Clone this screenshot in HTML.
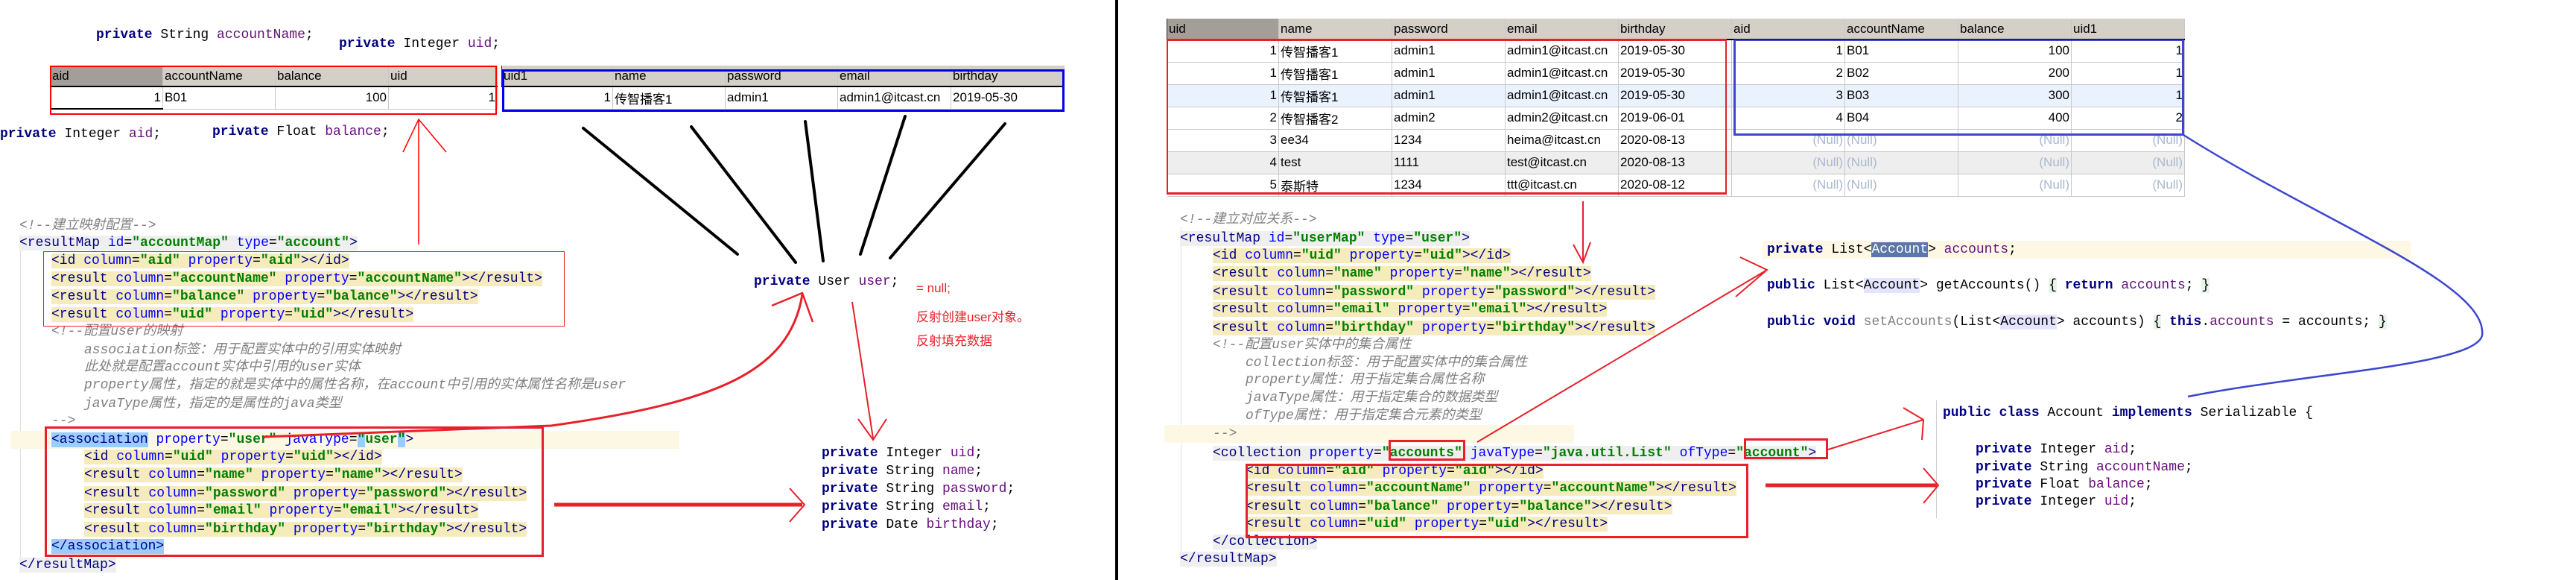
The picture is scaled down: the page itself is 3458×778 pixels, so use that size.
<!DOCTYPE html>
<html><head><meta charset="utf-8">
<style>
*{margin:0;padding:0;box-sizing:border-box}
body{width:3458px;height:778px;background:#fff;position:relative;overflow:hidden;font-family:"Liberation Mono","Noto Sans CJK SC",monospace;font-size:18px}
.l{position:absolute;height:24px;line-height:24px;white-space:pre;color:#000}
.k{color:#000080;font-weight:bold}
.f{color:#660e7a}
.t{color:#000080}
.a{color:#0000ff}
.v{color:#008000;font-weight:bold}
.c{color:#808080;font-style:italic}
.y{background:#f6ebbc}
.g{background:#efefef}
.sel{background:#99ccff}
table{position:absolute;border-collapse:collapse;table-layout:fixed;font-family:"Liberation Sans","Noto Sans CJK SC",sans-serif;font-size:17px}
td,th{overflow:hidden;white-space:nowrap;padding:0 2px;font-weight:normal;text-align:left;border-right:1px solid #c8c8c8;border-bottom:1px solid #c8c8c8}
th{background:#d4d0c8;height:28px;border-bottom:2px solid #000;border-left:1px solid #222}
th.d{background:#a39f98}
td{height:30px}
.r{text-align:right}
.n{color:#a9b8d0}
.rt{position:absolute;color:#e8202a;font-family:"Liberation Sans","Noto Sans CJK SC",sans-serif;font-size:17px;white-space:pre}
.box{position:absolute;border:3px solid #e8202a}
</style></head><body>

<!-- LEFT PANEL -->
<div class="l" style="left:129px;top:35px"><span class="k">private</span> String <span class="f">accountName</span>;</div>
<div class="l" style="left:455px;top:47px"><span class="k">private</span> Integer <span class="f">uid</span>;</div>
<div class="l" style="left:0px;top:168px"><span class="k">private</span> Integer <span class="f">aid</span>;</div>
<div class="l" style="left:285px;top:165px"><span class="k">private</span> Float <span class="f">balance</span>;</div>

<table style="left:67px;top:88px;width:600px">
<colgroup><col style="width:151px"><col style="width:151px"><col style="width:152px"><col style="width:146px"></colgroup>
<tr><th class="d">aid</th><th>accountName</th><th>balance</th><th>uid</th></tr>
<tr><td class="r" style="border-bottom:2px solid #000">1</td><td>B01</td><td class="r">100</td><td class="r">1</td></tr>
</table>
<table style="left:673px;top:88px;width:755px">
<colgroup><col style="width:149px"><col style="width:151px"><col style="width:151px"><col style="width:152px"><col style="width:152px"></colgroup>
<tr><th>uid1</th><th>name</th><th>password</th><th>email</th><th>birthday</th></tr>
<tr><td class="r">1</td><td>传智播客1</td><td>admin1</td><td>admin1@itcast.cn</td><td>2019-05-30</td></tr>
</table>
<div style="position:absolute;left:67px;top:88px;width:600px;height:66px;border:2px solid #ff0000"></div>
<div style="position:absolute;left:674px;top:93px;width:755px;height:57px;border:3px solid #0000ee"></div>

<div style="position:absolute;left:27px;top:315px;width:1px;height:445px;background:#e0e0e0"></div>
<div style="position:absolute;left:14px;top:578px;width:898px;height:24px;background:#fdf8e4"></div>

<div class="l c" style="left:26px;top:291px">&lt;!--建立映射配置--&gt;</div>
<div class="l" style="left:26px;top:314px"><span class="g"><span class="t">&lt;resultMap </span><span class="a">id</span>=<span class="v">"accountMap"</span> <span class="a">type</span>=<span class="v">"account"</span><span class="t">&gt;</span></span></div>
<div class="l" style="left:69px;top:338px"><span class="y"><span class="t">&lt;id </span><span class="a">column</span>=<span class="v">"aid"</span> <span class="a">property</span>=<span class="v">"aid"</span><span class="t">&gt;&lt;/id&gt;</span></span></div>
<div class="l" style="left:69px;top:362px"><span class="y"><span class="t">&lt;result </span><span class="a">column</span>=<span class="v">"accountName"</span> <span class="a">property</span>=<span class="v">"accountName"</span><span class="t">&gt;&lt;/result&gt;</span></span></div>
<div class="l" style="left:69px;top:386px"><span class="y"><span class="t">&lt;result </span><span class="a">column</span>=<span class="v">"balance"</span> <span class="a">property</span>=<span class="v">"balance"</span><span class="t">&gt;&lt;/result&gt;</span></span></div>
<div class="l" style="left:69px;top:410px"><span class="y"><span class="t">&lt;result </span><span class="a">column</span>=<span class="v">"uid"</span> <span class="a">property</span>=<span class="v">"uid"</span><span class="t">&gt;&lt;/result&gt;</span></span></div>
<div class="l c" style="left:69px;top:433px">&lt;!--配置user的映射</div>
<div class="l c" style="left:113px;top:458px">association标签：用于配置实体中的引用实体映射</div>
<div class="l c" style="left:113px;top:481px">此处就是配置account实体中引用的user实体</div>
<div class="l c" style="left:113px;top:505px">property属性，指定的就是实体中的属性名称，在account中引用的实体属性名称是user</div>
<div class="l c" style="left:113px;top:530px">javaType属性，指定的是属性的java类型</div>
<div class="l c" style="left:69px;top:553px">--&gt;</div>
<div class="l" style="left:69px;top:578px"><span class="t sel">&lt;association</span><span class="t"> </span><span class="a">property</span>=<span class="v">"user"</span> <span class="a">javaType</span>=<span class="v"><span class="sel">"</span>user<span class="sel">"</span></span><span class="t">&gt;</span></div>
<div class="l" style="left:113px;top:601px"><span class="y"><span class="t">&lt;id </span><span class="a">column</span>=<span class="v">"uid"</span> <span class="a">property</span>=<span class="v">"uid"</span><span class="t">&gt;&lt;/id&gt;</span></span></div>
<div class="l" style="left:113px;top:625px"><span class="y"><span class="t">&lt;result </span><span class="a">column</span>=<span class="v">"name"</span> <span class="a">property</span>=<span class="v">"name"</span><span class="t">&gt;&lt;/result&gt;</span></span></div>
<div class="l" style="left:113px;top:650px"><span class="y"><span class="t">&lt;result </span><span class="a">column</span>=<span class="v">"password"</span> <span class="a">property</span>=<span class="v">"password"</span><span class="t">&gt;&lt;/result&gt;</span></span></div>
<div class="l" style="left:113px;top:673px"><span class="y"><span class="t">&lt;result </span><span class="a">column</span>=<span class="v">"email"</span> <span class="a">property</span>=<span class="v">"email"</span><span class="t">&gt;&lt;/result&gt;</span></span></div>
<div class="l" style="left:113px;top:698px"><span class="y"><span class="t">&lt;result </span><span class="a">column</span>=<span class="v">"birthday"</span> <span class="a">property</span>=<span class="v">"birthday"</span><span class="t">&gt;&lt;/result&gt;</span></span></div>
<div class="l" style="left:69px;top:721px"><span class="t sel">&lt;/association&gt;</span></div>
<div class="l" style="left:26px;top:746px"><span class="g t">&lt;/resultMap&gt;</span></div>

<div style="position:absolute;left:58px;top:337px;width:700px;height:101px;border:1.5px solid #e8202a"></div>
<div class="box" style="left:60px;top:572px;width:670px;height:175px"></div>

<div class="l" style="left:1012px;top:366px"><span class="k">private</span> User <span class="f">user</span>;</div>
<div class="rt" style="left:1230px;top:377px">= null;</div>
<div class="rt" style="left:1230px;top:411px">反射创建user对象。</div>
<div class="rt" style="left:1230px;top:443px">反射填充数据</div>

<div class="l" style="left:1103px;top:596px"><span class="k">private</span> Integer <span class="f">uid</span>;</div>
<div class="l" style="left:1103px;top:620px"><span class="k">private</span> String <span class="f">name</span>;</div>
<div class="l" style="left:1103px;top:644px"><span class="k">private</span> String <span class="f">password</span>;</div>
<div class="l" style="left:1103px;top:668px"><span class="k">private</span> String <span class="f">email</span>;</div>
<div class="l" style="left:1103px;top:692px"><span class="k">private</span> Date <span class="f">birthday</span>;</div>

<!-- divider -->
<div style="position:absolute;left:1497px;top:0;width:4px;height:778px;background:#000"></div>

<!-- RIGHT PANEL -->
<table style="left:1566px;top:25px;width:1366px">
<colgroup><col style="width:150px"><col style="width:152px"><col style="width:152px"><col style="width:152px"><col style="width:152px"><col style="width:152px"><col style="width:152px"><col style="width:152px"><col style="width:152px"></colgroup>
<tr><th class="d">uid</th><th>name</th><th>password</th><th>email</th><th>birthday</th><th>aid</th><th>accountName</th><th>balance</th><th>uid1</th></tr>
<tr><td class="r">1</td><td>传智播客1</td><td>admin1</td><td>admin1@itcast.cn</td><td>2019-05-30</td><td class="r">1</td><td>B01</td><td class="r">100</td><td class="r">1</td></tr>
<tr><td class="r">1</td><td>传智播客1</td><td>admin1</td><td>admin1@itcast.cn</td><td>2019-05-30</td><td class="r">2</td><td>B02</td><td class="r">200</td><td class="r">1</td></tr>
<tr style="background:#eaf3fd"><td class="r">1</td><td>传智播客1</td><td>admin1</td><td>admin1@itcast.cn</td><td>2019-05-30</td><td class="r">3</td><td>B03</td><td class="r">300</td><td class="r">1</td></tr>
<tr><td class="r">2</td><td>传智播客2</td><td>admin2</td><td>admin2@itcast.cn</td><td>2019-06-01</td><td class="r">4</td><td>B04</td><td class="r">400</td><td class="r">2</td></tr>
<tr><td class="r">3</td><td>ee34</td><td>1234</td><td>heima@itcast.cn</td><td>2020-08-13</td><td class="r n">(Null)</td><td class="n">(Null)</td><td class="r n">(Null)</td><td class="r n">(Null)</td></tr>
<tr style="background:#eeeeee"><td class="r">4</td><td>test</td><td>1111</td><td>test@itcast.cn</td><td>2020-08-13</td><td class="r n">(Null)</td><td class="n">(Null)</td><td class="r n">(Null)</td><td class="r n">(Null)</td></tr>
<tr><td class="r">5</td><td>泰斯特</td><td>1234</td><td>ttt@itcast.cn</td><td>2020-08-12</td><td class="r n">(Null)</td><td class="n">(Null)</td><td class="r n">(Null)</td><td class="r n">(Null)</td></tr>
</table>
<div style="position:absolute;left:1566px;top:52px;width:752px;height:209px;border:2px solid #e8202a;border-top-width:3px;border-bottom-width:3px"></div>
<div style="position:absolute;left:2327px;top:53px;width:605px;height:129px;border:3px solid #3c46d0;border-top-width:2px"></div>

<div style="position:absolute;left:1585px;top:305px;width:1px;height:455px;background:#e0e0e0"></div>
<div style="position:absolute;left:1563px;top:570px;width:550px;height:24px;background:#fdf8e4"></div>
<div style="position:absolute;left:2366px;top:323px;width:870px;height:24px;background:#fdf8e4"></div>

<div class="l c" style="left:1584px;top:283px">&lt;!--建立对应关系--&gt;</div>
<div class="l" style="left:1584px;top:308px"><span class="g"><span class="t">&lt;resultMap </span><span class="a">id</span>=<span class="v">"userMap"</span> <span class="a">type</span>=<span class="v">"user"</span><span class="t">&gt;</span></span></div>
<div class="l" style="left:1628px;top:331px"><span class="y"><span class="t">&lt;id </span><span class="a">column</span>=<span class="v">"uid"</span> <span class="a">property</span>=<span class="v">"uid"</span><span class="t">&gt;&lt;/id&gt;</span></span></div>
<div class="l" style="left:1628px;top:355px"><span class="y"><span class="t">&lt;result </span><span class="a">column</span>=<span class="v">"name"</span> <span class="a">property</span>=<span class="v">"name"</span><span class="t">&gt;&lt;/result&gt;</span></span></div>
<div class="l" style="left:1628px;top:380px"><span class="y"><span class="t">&lt;result </span><span class="a">column</span>=<span class="v">"password"</span> <span class="a">property</span>=<span class="v">"password"</span><span class="t">&gt;&lt;/result&gt;</span></span></div>
<div class="l" style="left:1628px;top:403px"><span class="y"><span class="t">&lt;result </span><span class="a">column</span>=<span class="v">"email"</span> <span class="a">property</span>=<span class="v">"email"</span><span class="t">&gt;&lt;/result&gt;</span></span></div>
<div class="l" style="left:1628px;top:428px"><span class="y"><span class="t">&lt;result </span><span class="a">column</span>=<span class="v">"birthday"</span> <span class="a">property</span>=<span class="v">"birthday"</span><span class="t">&gt;&lt;/result&gt;</span></span></div>
<div class="l c" style="left:1628px;top:451px">&lt;!--配置user实体中的集合属性</div>
<div class="l c" style="left:1672px;top:475px">collection标签：用于配置实体中的集合属性</div>
<div class="l c" style="left:1672px;top:498px">property属性：用于指定集合属性名称</div>
<div class="l c" style="left:1672px;top:522px">javaType属性：用于指定集合的数据类型</div>
<div class="l c" style="left:1672px;top:546px">ofType属性：用于指定集合元素的类型</div>
<div class="l c" style="left:1628px;top:570px">--&gt;</div>
<div class="l" style="left:1628px;top:596px"><span class="g"><span class="t">&lt;collection </span><span class="a">property</span>=<span class="v">"accounts"</span> <span class="a">javaType</span>=<span class="v">"java.util.List"</span> <span class="a">ofType</span>=<span class="v">"account"</span><span class="t">&gt;</span></span></div>
<div class="l" style="left:1672px;top:620px"><span class="y"><span class="t">&lt;id </span><span class="a">column</span>=<span class="v">"aid"</span> <span class="a">property</span>=<span class="v">"aid"</span><span class="t">&gt;&lt;/id&gt;</span></span></div>
<div class="l" style="left:1672px;top:643px"><span class="y"><span class="t">&lt;result </span><span class="a">column</span>=<span class="v">"accountName"</span> <span class="a">property</span>=<span class="v">"accountName"</span><span class="t">&gt;&lt;/result&gt;</span></span></div>
<div class="l" style="left:1672px;top:668px"><span class="y"><span class="t">&lt;result </span><span class="a">column</span>=<span class="v">"balance"</span> <span class="a">property</span>=<span class="v">"balance"</span><span class="t">&gt;&lt;/result&gt;</span></span></div>
<div class="l" style="left:1672px;top:691px"><span class="y"><span class="t">&lt;result </span><span class="a">column</span>=<span class="v">"uid"</span> <span class="a">property</span>=<span class="v">"uid"</span><span class="t">&gt;&lt;/result&gt;</span></span></div>
<div class="l" style="left:1628px;top:715px"><span class="g t">&lt;/collection&gt;</span></div>
<div class="l" style="left:1584px;top:738px"><span class="g t">&lt;/resultMap&gt;</span></div>

<div class="box" style="left:1864px;top:590px;width:103px;height:28px"></div>
<div class="box" style="left:2341px;top:588px;width:113px;height:28px"></div>
<div class="box" style="left:1672px;top:622px;width:675px;height:100px"></div>

<div class="l" style="left:2372px;top:323px"><span class="k">private</span> List&lt;<span style="background:#5a76aa;color:#fff">Account</span>&gt; <span class="f">accounts</span>;</div>
<div class="l" style="left:2372px;top:371px"><span class="k">public</span> List&lt;<span style="background:#e4e4ff">Account</span>&gt; getAccounts() <span style="background:#e8f4e8">{</span> <span class="k">return</span> <span class="f">accounts</span>; <span style="background:#e8f4e8">}</span></div>
<div class="l" style="left:2372px;top:420px"><span class="k">public void</span> <span style="color:#808080">setAccounts</span>(List&lt;<span style="background:#e4e4ff">Account</span>&gt; accounts) <span style="background:#e8f4e8">{</span> <span class="k">this</span>.<span class="f">accounts</span> = accounts; <span style="background:#e8f4e8">}</span></div>

<div style="position:absolute;left:2599px;top:537px;width:1px;height:158px;background:#d0d0d0"></div>
<div class="l" style="left:2608px;top:542px"><span class="k">public class</span> Account <span class="k">implements</span> Serializable {</div>
<div class="l" style="left:2652px;top:591px"><span class="k">private</span> Integer <span class="f">aid</span>;</div>
<div class="l" style="left:2652px;top:615px"><span class="k">private</span> String <span class="f">accountName</span>;</div>
<div class="l" style="left:2652px;top:638px"><span class="k">private</span> Float <span class="f">balance</span>;</div>
<div class="l" style="left:2652px;top:661px"><span class="k">private</span> Integer <span class="f">uid</span>;</div>

<svg width="3458" height="778" style="position:absolute;left:0;top:0" fill="none">
<g stroke="#000" stroke-width="4" stroke-linecap="round">
<path d="M783 172L990 341M928 170L1068 352M1081 163L1105 350M1215 156L1155 341M1349 166L1195 346"/>
</g>
<g stroke="#f00" stroke-width="1.5">
<path d="M562 328L562 160M541 204L562 160L599 204"/>
</g>
<g stroke="#e8202a" stroke-width="3">
<path d="M354 586L740 571C960 540 1060 500 1077 395"/>
<path d="M1036 410L1077 393L1091 432" stroke-width="2.5"/>
<path d="M1144 405L1172 588M1152 562L1172 590L1190 562" stroke-width="2"/>
<path d="M744 677L1077 677" stroke-width="5"/>
<path d="M1060 655L1080 677L1060 700" stroke-width="2"/>
<path d="M2125 270L2125 350M2112 328L2125 352L2135 325" stroke-width="2"/>
<path d="M1983 593L2372 362M2336 345L2372 362L2330 398" stroke-width="2"/>
<path d="M2454 603L2582 563M2555 547L2582 563L2580 590" stroke-width="2"/>
<path d="M2370 651L2600 651" stroke-width="5"/>
<path d="M2582 628L2602 651L2582 675" stroke-width="2"/>
</g>
<path d="M2931 181C3120 300 3340 380 3332 450C3322 490 3100 500 2937 532" stroke="#3c46d0" stroke-width="2.5"/>
</svg>
</body></html>
